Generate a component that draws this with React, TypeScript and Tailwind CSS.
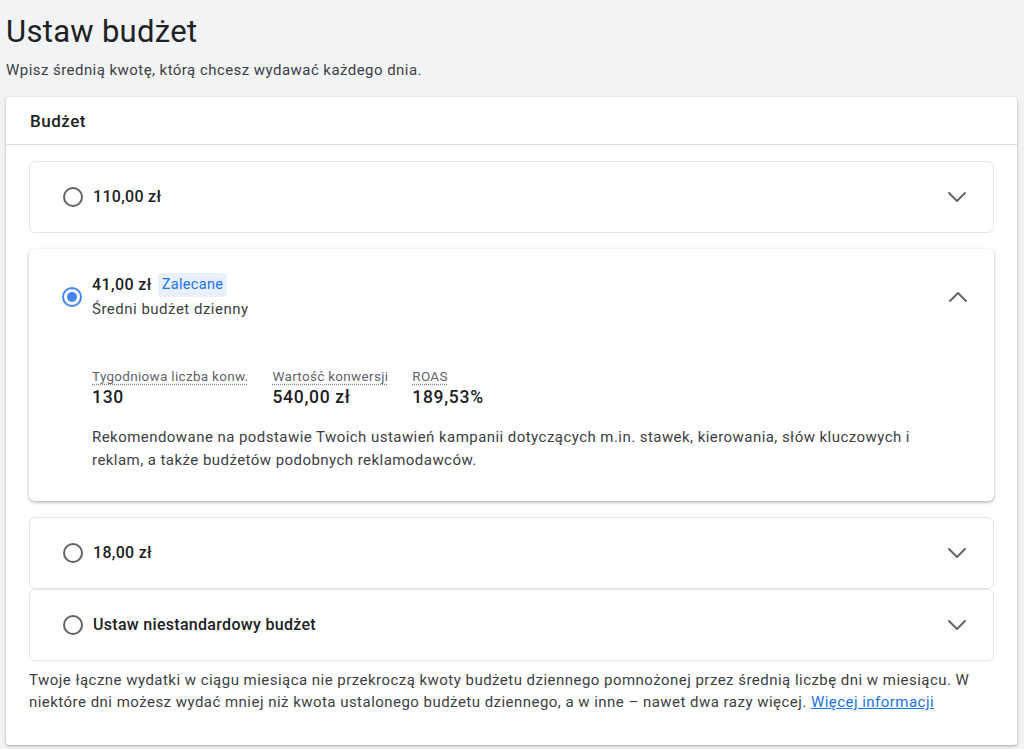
import { ChevronDown, ChevronUp } from "lucide-react"

function Radio({ checked }: { checked?: boolean }) {
  return (
    <span
      className={`flex h-5 w-5 flex-shrink-0 items-center justify-center rounded-full border-2 ${
        checked ? "border-[#4285f4]" : "border-[#5f6368]"
      }`}
    >
      {checked && <span className="h-2.5 w-2.5 rounded-full bg-[#4285f4]" />}
    </span>
  )
}

function Option({ label }: { label: string }) {
  return (
    <div className="flex h-[72px] items-center rounded-md border border-[#e6e6e6] bg-white pl-[33px] pr-[20px]">
      <Radio />
      <span className="ml-2.5 text-[16px] font-medium tracking-[0.3px] text-[#202124]">{label}</span>
      <ChevronDown className="ml-auto h-8 w-8 text-[#5f6368]" strokeWidth={1.4} />
    </div>
  )
}

function Stat({ label, value }: { label: string; value: string }) {
  return (
    <div className="flex flex-col">
      <span className="text-[13.5px] leading-[18px] tracking-[0.3px] text-[#5f6368] underline decoration-dotted decoration-[#80868b] underline-offset-[3px]">
        {label}
      </span>
      <span className="mt-[1px] text-[17.5px] font-medium leading-[22px] tracking-[0.7px] text-[#202124]">{value}</span>
    </div>
  )
}

export default function App() {
  return (
    <div
      className="min-h-[749px] bg-[#f1f3f4] pl-[6px] pr-[7px] pt-[12px] text-[#3c4043]"
      style={{ fontFamily: "Roboto, 'Noto Sans', sans-serif" }}
    >
      <h1 className="text-[31px] leading-[40px] tracking-[0.3px] text-[#202124]">Ustaw budżet</h1>
      <p className="mt-[7px] text-[15px] leading-[22px] tracking-[0.45px] text-[#3c4043]">
        Wpisz średnią kwotę, którą chcesz wydawać każdego dnia.
      </p>

      <div className="mt-[16px] rounded-[3px] bg-white shadow-[0_1px_3px_rgba(60,64,67,0.3),0_1px_2px_rgba(60,64,67,0.15)]">
        <div className="flex h-12 items-center border-b border-[#dadce0] px-6 pt-[3px]">
          <span className="text-[17px] font-medium tracking-[0.5px] text-[#202124]">Budżet</span>
        </div>

        <div className="flex flex-col px-[23px] pt-4">
          <Option label="110,00 zł" />

          <div className="mt-4 rounded-md bg-white shadow-[0_1px_3px_rgba(60,64,67,0.3),0_2px_4px_rgba(60,64,67,0.15)]">
            <div className="flex items-center pl-[33px] pr-[20px] pt-[24px] pb-[20px]">
              <Radio checked />
              <div className="ml-2.5 flex flex-col">
                <div className="flex items-center gap-1.5">
                  <span className="text-[16px] font-medium tracking-[0.4px] text-[#202124]">41,00 zł</span>
                  <span className="rounded-sm bg-[#e8f0fe] px-1 text-[14.5px] leading-[24px] tracking-[0.3px] text-[#1a73e8]">
                    Zalecane
                  </span>
                </div>
                <span className="text-[15px] leading-[24px] tracking-[0.5px] text-[#3c4043]">Średni budżet dzienny</span>
              </div>
              <ChevronUp className="ml-auto h-8 w-8 text-[#5f6368]" strokeWidth={1.4} />
            </div>
            <div className="pl-[63px] pr-[24px] pt-[26px] pb-[29px]">
              <div className="flex gap-6">
                <Stat label="Tygodniowa liczba konw." value="130" />
                <Stat label="Wartość konwersji" value="540,00 zł" />
                <Stat label="ROAS" value="189,53%" />
              </div>
              <p className="mt-[18px] text-[15px] leading-[23px] tracking-[0.45px] text-[#3c4043]">
                Rekomendowane na podstawie Twoich ustawień kampanii dotyczących m.in. stawek, kierowania, słów kluczowych i
                <br />
                reklam, a także budżetów podobnych reklamodawców.
              </p>
            </div>
          </div>

          <div className="mt-4">
            <Option label="18,00 zł" />
          </div>
          <Option label="Ustaw niestandardowy budżet" />

          <p className="mt-[8px] pb-[32px] text-[15px] leading-[22px] tracking-[0.47px] text-[#3c4043]">
            Twoje łączne wydatki w ciągu miesiąca nie przekroczą kwoty budżetu dziennego pomnożonej przez średnią liczbę dni w
            miesiącu. W
            <br />
            niektóre dni możesz wydać mniej niż kwota ustalonego budżetu dziennego, a w inne – nawet dwa razy więcej.{" "}
            <a className="text-[#1a73e8] underline" href="#">
              Więcej informacji
            </a>
          </p>
        </div>
      </div>
    </div>
  )
}
